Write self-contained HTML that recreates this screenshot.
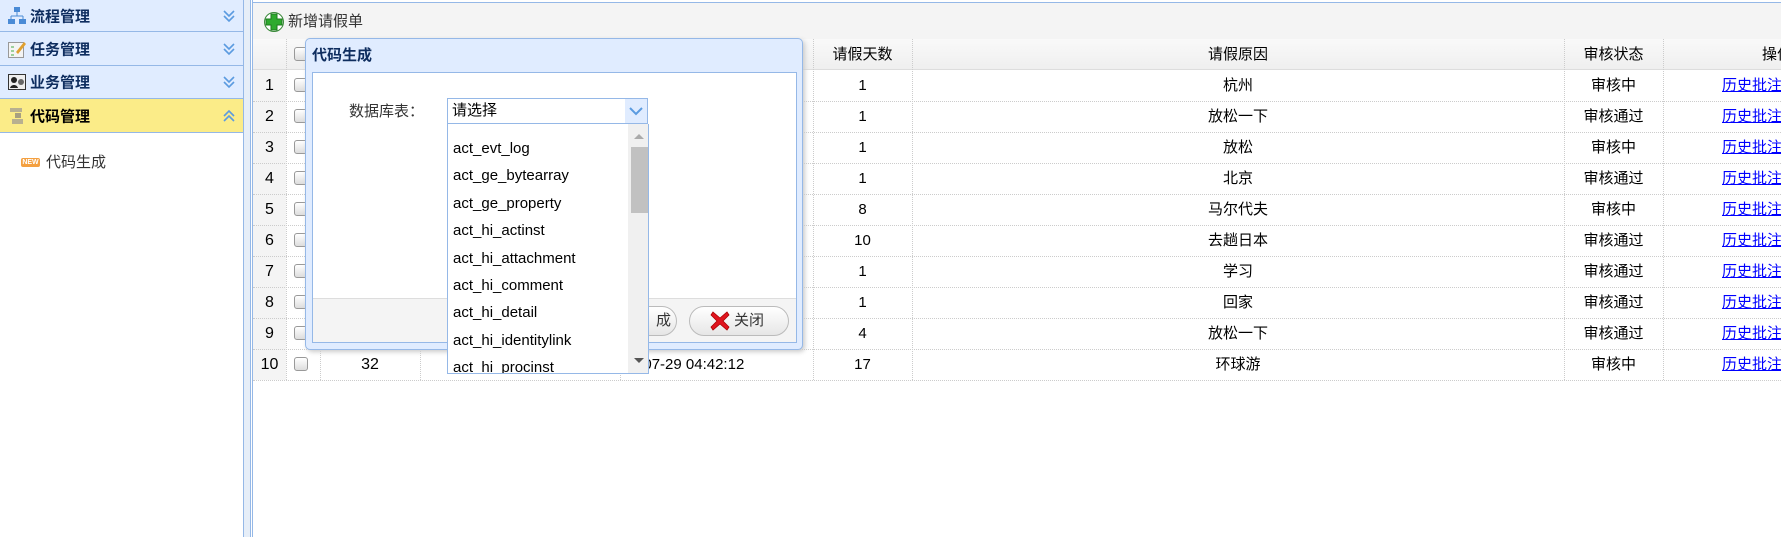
<!DOCTYPE html>
<html><head><meta charset="utf-8"><style>
*{margin:0;padding:0;box-sizing:border-box;white-space:nowrap}
body{width:1781px;height:537px;overflow:hidden;background:#fff;font-family:"Liberation Sans","Noto Sans CJK SC",sans-serif;font-size:15px;color:#000;position:relative}
.a{position:absolute}
.sh{position:absolute;left:0;width:244px;background:#E0ECFF;border-bottom:1px solid #95B8E7;border-right:1px solid #95B8E7}
.sh b{position:absolute;left:30px;top:50%;transform:translateY(-50%);font-size:15px;color:#0E2D5F}
.chev{position:absolute;left:222px;top:50%;transform:translateY(-50%);width:14px;height:14px}
.hl{position:absolute;top:39px;height:31px;background:linear-gradient(#F9F9F9,#EFEFEF);border-bottom:1px solid #ddd}
.vl{position:absolute;top:39px;height:341px;border-left:1px dotted #ccc}
.hr{position:absolute;left:253px;width:1528px;border-top:1px dotted #ccc}
.c{position:absolute;text-align:center;line-height:31px;height:31px}
.cb{position:absolute;left:294px;width:14px;height:14px;border:1px solid #999;border-radius:3px;background:linear-gradient(#fff,#ddd)}
.lk{color:#00f;text-decoration:underline}
.it{position:absolute;left:453px;font-size:15px;color:#000;line-height:20px}
</style></head><body>
<!-- sidebar -->
<div class="a" style="left:0;top:0;width:244px;height:537px;border-right:1px solid #95B8E7"></div>
<div class="a" style="left:244px;top:0;width:7px;height:537px;background:#E6EEF8"></div>
<div class="a" style="left:250px;top:0;width:1px;height:537px;background:#95B8E7"></div>
<div class="a" style="left:252px;top:0;width:1px;height:537px;background:#95B8E7"></div>
<div class="sh" style="top:0;height:32px"><svg class="a" style="left:8px;top:7px" width="18" height="18"><rect x="6" y="0" width="6" height="5" fill="#4A8BD6"/><path d="M9 5v4M3 9h12M3 9v3M15 9v3" stroke="#4A8BD6" fill="none"/><rect x="0" y="12" width="7" height="5" fill="#4A8BD6"/><rect x="11" y="12" width="7" height="5" fill="#4A8BD6"/></svg><b>流程管理</b><svg class="chev" viewBox="0 0 14 14"><path d="M2 2l5 5 5-5M2 7l5 5 5-5" stroke="#5B9BE0" stroke-width="1.6" fill="none"/></svg></div>
<div class="sh" style="top:32px;height:34px"><svg class="a" style="left:8px;top:8px" width="18" height="18"><rect x="0.5" y="2.5" width="15" height="15" fill="#f4f4f4" stroke="#999"/><path d="M3 7h3M3 11h3M3 15h3" stroke="#4a4"/><path d="M8 12l8-10 2 2-8 10z" fill="#E0A030"/></svg><b>任务管理</b><svg class="chev" viewBox="0 0 14 14"><path d="M2 2l5 5 5-5M2 7l5 5 5-5" stroke="#5B9BE0" stroke-width="1.6" fill="none"/></svg></div>
<div class="sh" style="top:66px;height:33px"><svg class="a" style="left:8px;top:8px" width="18" height="16"><rect x="0.5" y="0.5" width="17" height="15" fill="#eee" stroke="#333"/><circle cx="6" cy="6" r="3" fill="#222"/><path d="M2 14c1-4 7-4 8 0z" fill="#222"/><circle cx="13" cy="8" r="3" fill="#666"/></svg><b>业务管理</b><svg class="chev" viewBox="0 0 14 14"><path d="M2 2l5 5 5-5M2 7l5 5 5-5" stroke="#5B9BE0" stroke-width="1.6" fill="none"/></svg></div>
<div class="sh" style="top:99px;height:34px;background:#FBEC88"><svg class="a" style="left:8px;top:8px" width="18" height="18"><rect x="2" y="1" width="12" height="4" fill="#B8B090"/><rect x="7" y="6" width="6" height="5" fill="#A8A080"/><rect x="4" y="12" width="11" height="5" fill="#B8B090"/></svg><b style="color:#000">代码管理</b><svg class="chev" viewBox="0 0 14 14"><path d="M2 7l5-5 5 5M2 12l5-5 5 5" stroke="#5B9BE0" stroke-width="1.6" fill="none"/></svg></div>
<div class="a" style="left:21px;top:158px;width:19px;height:9px;background:#F4A040;border-radius:2px;color:#fff;font-size:7px;font-weight:bold;line-height:9px;text-align:center">NEW</div>
<div class="a" style="left:46px;top:153px;font-size:15px;color:#333;line-height:20px">代码生成</div>
<!-- main -->
<div class="a" style="left:253px;top:2px;width:1528px;height:1px;background:#95B8E7"></div>
<div class="a" style="left:253px;top:3px;width:1528px;height:36px;background:#F4F4F4"></div>
<svg class="a" style="left:264px;top:12px" width="20" height="20"><circle cx="10" cy="10" r="9.5" fill="#fff" stroke="#3a8a3a"/><path d="M7 2h6v5h5v6h-5v5H7v-5H2V7h5z" fill="#2EAA2E" stroke="#1d7a1d"/></svg>
<div class="a" style="left:288px;top:12px;font-size:15px;color:#333;line-height:20px">新增请假单</div>
<div class="hl" style="left:253px;width:1528px"></div>
<div class="a" style="left:253px;top:70px;width:33px;height:310px;background:#F4F4F4"></div>
<div class="vl" style="left:286px"></div><div class="vl" style="left:320px"></div><div class="vl" style="left:420px"></div><div class="vl" style="left:620px"></div><div class="vl" style="left:813px"></div><div class="vl" style="left:912px"></div><div class="vl" style="left:1564px"></div><div class="vl" style="left:1663px"></div>
<div class="hr" style="top:101px"></div><div class="hr" style="top:132px"></div><div class="hr" style="top:163px"></div><div class="hr" style="top:194px"></div><div class="hr" style="top:225px"></div><div class="hr" style="top:256px"></div><div class="hr" style="top:287px"></div><div class="hr" style="top:318px"></div><div class="hr" style="top:349px"></div><div class="hr" style="top:380px"></div>
<div class="cb" style="top:47px"></div>
<div class="c" style="left:813px;top:39px;width:99px">请假天数</div>
<div class="c" style="left:912px;top:39px;width:652px">请假原因</div>
<div class="c" style="left:1564px;top:39px;width:99px">审核状态</div>
<div class="a" style="left:1762px;top:39px;line-height:31px">操作</div>
<div id="rows"></div>
<script>
var d=[1,1,1,1,8,10,1,1,4,17],r=["杭州","放松一下","放松","北京","马尔代夫","去趟日本","学习","回家","放松一下","环球游"],s=["审核中","审核通过","审核中","审核通过","审核中","审核通过","审核通过","审核通过","审核通过","审核中"],h="";
for(var i=0;i<10;i++){var t=70+i*31;h+='<div class="c" style="left:253px;top:'+t+'px;width:33px;font-size:16px">'+(i+1)+'</div><div class="cb" style="top:'+(t+8)+'px"></div><div class="c" style="left:813px;top:'+t+'px;width:99px">'+d[i]+'</div><div class="c" style="left:912px;top:'+t+'px;width:652px">'+r[i]+'</div><div class="c" style="left:1564px;top:'+t+'px;width:99px">'+s[i]+'</div><div class="a lk" style="left:1722px;top:'+(t+6)+'px;line-height:20px">历史批注</div>';}
document.getElementById("rows").innerHTML=h;
</script>
<div class="c" style="left:320px;top:349px;width:100px;font-size:16px">32</div>
<div class="a" style="left:605px;top:349px;line-height:31px;font-size:15px">2017-07-29 04:42:12</div>
<!-- dialog -->
<div class="a" style="left:305px;top:38px;width:498px;height:312px;background:#E0ECFF;border:1px solid #95B8E7;border-radius:5px;box-shadow:2px 2px 5px #ccc"></div>
<div class="a" style="left:312px;top:46px;font-weight:bold;font-size:15px;color:#0E2D5F;line-height:20px">代码生成</div>
<div class="a" style="left:312px;top:72px;width:485px;height:271px;background:#fff;border:1px solid #95B8E7"></div>
<div class="a" style="left:313px;top:298px;width:483px;height:44px;background:#F4F4F4;border-top:1px solid #ddd"></div>
<div class="a" style="left:590px;top:306px;width:87px;height:30px;border:1px solid #bbb;border-radius:15px;background:linear-gradient(#fff,#e6e6e6)"></div>
<div class="a" style="left:656px;top:311px;line-height:20px;color:#333">成</div>
<div class="a" style="left:689px;top:306px;width:100px;height:30px;border:1px solid #bbb;border-radius:15px;background:linear-gradient(#fff,#e6e6e6)"></div>
<svg class="a" style="left:710px;top:311px" width="20" height="20"><path d="M3 1l7 6 7-6 2 3-6 6 6 6-2 3-7-6-7 6-2-3 6-6-6-6z" fill="#E0141E" stroke="#a00" stroke-width=".8"/></svg>
<div class="a" style="left:734px;top:311px;line-height:20px;color:#333">关闭</div>
<div class="a" style="left:349px;top:102px;line-height:20px;color:#333">数据库表：</div>
<div class="a" style="left:447px;top:98px;width:201px;height:26px;border:1px solid #95B8E7;background:#fff"></div>
<div class="a" style="left:625px;top:99px;width:22px;height:24px;background:#E0ECFF"></div>
<svg class="a" style="left:629px;top:106px" width="14" height="10"><path d="M1 2l6 6 6-6" stroke="#5B9BE0" stroke-width="2" fill="none"/></svg>
<div class="a" style="left:452px;top:101px;line-height:20px">请选择</div>
<div class="a" style="left:447px;top:124px;width:202px;height:250px;background:#fff;border:1px solid #95B8E7;border-top:none;overflow:hidden">
<div class="a" style="left:180px;top:0;width:21px;height:250px;background:#F0F0F0"></div>
<div class="a" style="left:183px;top:23px;width:17px;height:66px;background:#C1C1C1"></div>
<div class="a" style="left:186px;top:10px;width:0;height:0;border:5px solid transparent;border-bottom-color:#aaa;border-top:0"></div>
<div class="a" style="left:186px;top:234px;width:0;height:0;border:5px solid transparent;border-top-color:#555;border-bottom:0"></div>
</div>
<div class="a" style="left:447px;top:124px;width:180px;height:249px;overflow:hidden">
<div class="it" style="left:6px;top:15px">act_evt_log</div>
<div class="it" style="left:6px;top:42px">act_ge_bytearray</div>
<div class="it" style="left:6px;top:70px">act_ge_property</div>
<div class="it" style="left:6px;top:97px">act_hi_actinst</div>
<div class="it" style="left:6px;top:125px">act_hi_attachment</div>
<div class="it" style="left:6px;top:152px">act_hi_comment</div>
<div class="it" style="left:6px;top:179px">act_hi_detail</div>
<div class="it" style="left:6px;top:207px">act_hi_identitylink</div>
<div class="it" style="left:6px;top:234px">act_hi_procinst</div>
</div>
</body></html>
